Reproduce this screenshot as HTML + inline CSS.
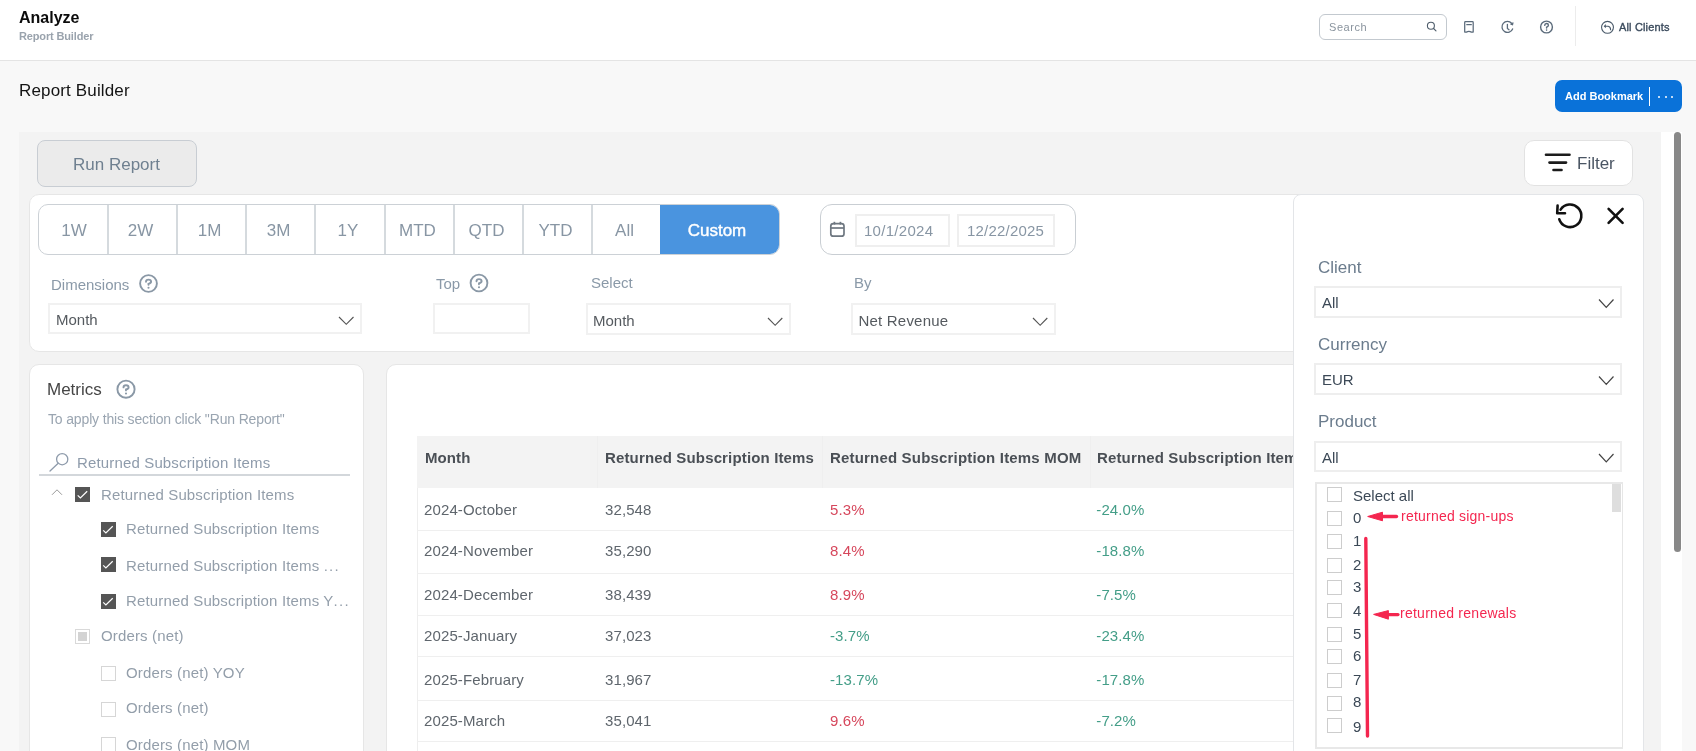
<!DOCTYPE html><html><head><meta charset="utf-8"><style>
html,body{margin:0;padding:0}
body{-webkit-font-smoothing:antialiased;will-change:transform;width:1696px;height:751px;overflow:hidden;position:relative;background:#f8f8f8;font-family:"Liberation Sans",sans-serif}
.a{position:absolute;box-sizing:border-box}
.t{position:absolute;white-space:nowrap;line-height:normal;font-family:"Liberation Sans",sans-serif}
svg{position:absolute;overflow:visible}
</style></head><body>
<div class="a" style="left:0px;top:0px;width:1696px;height:60px;background:#fff"></div>
<div class="a" style="left:0px;top:60px;width:1696px;height:1px;background:#e4e4e4"></div>
<div class="t" style="left:19px;top:9px;font-size:16px;color:#0b0b0b;font-weight:bold;">Analyze</div>
<div class="t" style="left:19px;top:30px;font-size:11px;color:#9aa3ad;font-weight:bold;letter-spacing:-0.15px">Report Builder</div>
<div class="a" style="left:1319px;top:14px;width:128px;height:26px;border:1px solid #c3c9cf;border-radius:6px;background:#fff"></div>
<div class="t" style="left:1329px;top:21px;font-size:11px;color:#8a949e;font-weight:normal;letter-spacing:0.55px">Search</div>
<svg style="left:0;top:0" width="1696" height="60"><g fill="none" stroke="#4f5d6b" stroke-width="1.1" stroke-linecap="round"><circle cx="1430.9" cy="25.8" r="3.5"/><line x1="1433.6" y1="28.5" x2="1436" y2="30.9"/></g><g fill="none" stroke="#5b6b7b" stroke-width="1.25" stroke-linejoin="round"><path d="M1464.7 32.1 V22.4 Q1464.7 21.7 1465.4 21.7 H1472.5 Q1473.2 21.7 1473.2 22.4 V32.1 H1471.4 Q1468.9 30.5 1466.4 32.1 Z"/><line x1="1466.3" y1="24.6" x2="1471.8" y2="24.6"/></g><g fill="none" stroke="#5b6b7b" stroke-width="1.3" stroke-linecap="round"><path d="M1511.6 23.2 A5.5 5.5 0 1 0 1512.6 28.9"/><path d="M1507.4 24.3 V28.4 L1509 29.8"/><path d="M1512.9 22.9 L1512.5 24.6 L1510.9 24.2"/></g><g fill="none" stroke="#5b6b7b" stroke-width="1.4" stroke-linecap="round"><circle cx="1546.5" cy="27" r="5.9"/><path d="M1544.7 25.4 Q1544.8 23.5 1546.6 23.5 Q1548.4 23.5 1548.4 25.2 Q1548.4 26.4 1546.6 27.2 V28"/></g><circle cx="1546.6" cy="30.1" r="0.8" fill="#5b6b7b"/><line x1="1575.5" y1="6" x2="1575.5" y2="46" stroke="#ececec" stroke-width="1"/><g fill="none" stroke="#4a5a6a" stroke-width="1.1" stroke-linecap="round"><circle cx="1607.5" cy="27.35" r="5.95"/><path d="M1605.2 26.2 H1608.2 Q1610.6 26.6 1610.6 29.8"/></g><path d="M1603.7 26.2 L1605.8 24.1 L1605.8 28.2 Z" fill="#4a5a6a"/></svg>
<div class="t" style="left:1619px;top:21px;font-size:11px;color:#3a4a5c;font-weight:normal;-webkit-text-stroke:0.35px #3a4a5c;letter-spacing:0.15px">All Clients</div>
<div class="t" style="left:19px;top:81px;font-size:17px;color:#141414;font-weight:normal;letter-spacing:0.15px">Report Builder</div>
<div class="a" style="left:1555px;top:80px;width:127px;height:32px;background:#0a72d9;border-radius:7px"></div>
<div class="t" style="left:1565px;top:90px;font-size:11px;color:#ffffff;font-weight:bold;">Add Bookmark</div>
<div class="a" style="left:1649px;top:87px;width:1px;height:19px;background:#fff"></div>
<div class="a" style="left:1658px;top:95.5px;width:2px;height:2px;background:#fff;border-radius:1px"></div>
<div class="a" style="left:1664.6px;top:95.5px;width:2px;height:2px;background:#fff;border-radius:1px"></div>
<div class="a" style="left:1671px;top:95.5px;width:2px;height:2px;background:#fff;border-radius:1px"></div>
<div class="a" style="left:19px;top:132px;width:1642px;height:619px;background:#f3f3f3"></div>
<div class="a" style="left:1661px;top:132px;width:21px;height:619px;background:#fff"></div>
<div class="a" style="left:1674px;top:132px;width:7px;height:420px;background:#888;border-radius:4px"></div>
<div class="a" style="left:37px;top:140px;width:160px;height:47px;background:#ebebeb;border:1px solid #c8cdd3;border-radius:8px"></div>
<div class="t" style="left:73px;top:155px;font-size:17px;color:#6f8090;font-weight:normal;">Run Report</div>
<div class="a" style="left:1524px;top:140px;width:109px;height:46px;background:#fff;border:1px solid #e2e2e2;border-radius:10px"></div>
<svg style="left:0;top:0" width="1696" height="200"><g stroke="#1c1c1c" stroke-width="2.6" stroke-linecap="round"><line x1="1546" y1="154.8" x2="1569.5" y2="154.8"/><line x1="1549.5" y1="162.6" x2="1566" y2="162.6"/><line x1="1553.5" y1="170" x2="1561.5" y2="170"/></g></svg>
<div class="t" style="left:1577px;top:154px;font-size:17px;color:#4a5563;font-weight:normal;">Filter</div>
<div class="a" style="left:29px;top:194px;width:1615px;height:158px;background:#fff;border:1px solid #e6e6e6;border-radius:10px"></div>
<div class="a" style="left:38px;top:204px;width:742px;height:51px;border:1px solid #ccd1d6;border-radius:10px;background:#fff"></div>
<div class="t" style="left:39.5px;width:69px;text-align:center;top:221px;font-size:17px;color:#8896a4">1W</div>
<div class="t" style="left:106px;width:69px;text-align:center;top:221px;font-size:17px;color:#8896a4">2W</div>
<div class="t" style="left:175px;width:69px;text-align:center;top:221px;font-size:17px;color:#8896a4">1M</div>
<div class="t" style="left:244px;width:69px;text-align:center;top:221px;font-size:17px;color:#8896a4">3M</div>
<div class="t" style="left:313px;width:70px;text-align:center;top:221px;font-size:17px;color:#8896a4">1Y</div>
<div class="t" style="left:383px;width:69px;text-align:center;top:221px;font-size:17px;color:#8896a4">MTD</div>
<div class="t" style="left:452px;width:69px;text-align:center;top:221px;font-size:17px;color:#8896a4">QTD</div>
<div class="t" style="left:521px;width:69px;text-align:center;top:221px;font-size:17px;color:#8896a4">YTD</div>
<div class="t" style="left:590px;width:69px;text-align:center;top:221px;font-size:17px;color:#8896a4">All</div>
<div class="a" style="left:107px;top:205px;width:1.5px;height:49px;background:#d5dade"></div>
<div class="a" style="left:176px;top:205px;width:1.5px;height:49px;background:#d5dade"></div>
<div class="a" style="left:245px;top:205px;width:1.5px;height:49px;background:#d5dade"></div>
<div class="a" style="left:314px;top:205px;width:1.5px;height:49px;background:#d5dade"></div>
<div class="a" style="left:384px;top:205px;width:1.5px;height:49px;background:#d5dade"></div>
<div class="a" style="left:453px;top:205px;width:1.5px;height:49px;background:#d5dade"></div>
<div class="a" style="left:522px;top:205px;width:1.5px;height:49px;background:#d5dade"></div>
<div class="a" style="left:591px;top:205px;width:1.5px;height:49px;background:#d5dade"></div>
<div class="a" style="left:660px;top:205px;width:119px;height:49px;background:#4a94df;border-top-right-radius:9px;border-bottom-right-radius:9px"></div>
<div class="t" style="left:658px;width:118px;text-align:center;top:221px;font-size:17px;color:#fff;-webkit-text-stroke:0.4px #fff">Custom</div>
<div class="a" style="left:820px;top:204px;width:256px;height:51px;border:1px solid #c9ced3;border-radius:12px;background:#fff"></div>
<svg style="left:0;top:0" width="1696" height="260"><g fill="none" stroke="#6e7780" stroke-width="1.7"><rect x="830.8" y="223.6" width="13.2" height="12.6" rx="2.5"/><line x1="830.8" y1="228" x2="844" y2="228"/><line x1="834.4" y1="221.8" x2="834.4" y2="224.6"/><line x1="840.4" y1="221.8" x2="840.4" y2="224.6"/></g></svg>
<div class="a" style="left:855px;top:214px;width:95px;height:33px;border:2px solid #efefef"></div>
<div class="t" style="left:864px;top:222px;font-size:15px;color:#8896a4;font-weight:normal;letter-spacing:0.28px">10/1/2024</div>
<div class="a" style="left:957px;top:214px;width:98px;height:33px;border:2px solid #efefef"></div>
<div class="t" style="left:967px;top:222px;font-size:15px;color:#8896a4;font-weight:normal;letter-spacing:0.2px">12/22/2025</div>
<div class="t" style="left:51px;top:276px;font-size:15px;color:#8a99a8;font-weight:normal;">Dimensions</div>
<svg style="left:0;top:0" width="1" height="1"><g fill="none" stroke="#8a98a6" stroke-width="1.9" stroke-linecap="round"><circle cx="148.5" cy="283.5" r="8.4"/><path d="M146.0 281.7 Q146.0 279.6 148.5 279.6 Q151.1 279.6 151.1 281.7 Q151.1 283.0 148.5 283.8 V284.7"/></g><circle cx="148.5" cy="287.8" r="1.05" fill="#8a98a6"/></svg>
<div class="a" style="left:48px;top:303px;width:314px;height:31px;border:2px solid #f1f1f1;background:#fff"></div>
<div class="t" style="left:56px;top:311px;font-size:15px;color:#555a5f;font-weight:normal;">Month</div>
<svg style="left:0;top:0" width="1" height="1"><path d="M339 317 L346.25 324.3 L353.5 317" fill="none" stroke="#555" stroke-width="1.15"/></svg>
<div class="t" style="left:436px;top:275px;font-size:15px;color:#8a99a8;font-weight:normal;">Top</div>
<svg style="left:0;top:0" width="1" height="1"><g fill="none" stroke="#8a98a6" stroke-width="1.9" stroke-linecap="round"><circle cx="479" cy="283" r="8.4"/><path d="M476.5 281.2 Q476.5 279.1 479 279.1 Q481.6 279.1 481.6 281.2 Q481.6 282.5 479 283.3 V284.2"/></g><circle cx="479" cy="287.3" r="1.05" fill="#8a98a6"/></svg>
<div class="a" style="left:433px;top:303px;width:97px;height:31px;border:2px solid #f1f1f1;background:#fff"></div>
<div class="t" style="left:591px;top:274px;font-size:15px;color:#8a99a8;font-weight:normal;">Select</div>
<div class="a" style="left:586px;top:303px;width:205px;height:32px;border:2px solid #f1f1f1;background:#fff"></div>
<div class="t" style="left:593px;top:312px;font-size:15px;color:#555a5f;font-weight:normal;">Month</div>
<svg style="left:0;top:0" width="1" height="1"><path d="M768 318 L775.15 325.3 L782.3 318" fill="none" stroke="#555" stroke-width="1.15"/></svg>
<div class="t" style="left:854px;top:274px;font-size:15px;color:#8a99a8;font-weight:normal;">By</div>
<div class="a" style="left:851px;top:303px;width:205px;height:32px;border:2px solid #f1f1f1;background:#fff"></div>
<div class="t" style="left:858.5px;top:312px;font-size:15px;color:#555a5f;font-weight:normal;letter-spacing:0.2px">Net Revenue</div>
<svg style="left:0;top:0" width="1" height="1"><path d="M1033 318 L1040.15 325.3 L1047.3 318" fill="none" stroke="#555" stroke-width="1.15"/></svg>
<div class="a" style="left:29px;top:364px;width:335px;height:420px;background:#fff;border:1px solid #e6e6e6;border-radius:10px"></div>
<div class="t" style="left:47px;top:380px;font-size:17px;color:#464646;font-weight:normal;">Metrics</div>
<svg style="left:0;top:0" width="1" height="1"><g fill="none" stroke="#8a98a6" stroke-width="1.9" stroke-linecap="round"><circle cx="126" cy="389.2" r="8.6"/><path d="M123.5 387.4 Q123.5 385.3 126 385.3 Q128.6 385.3 128.6 387.4 Q128.6 388.7 126 389.5 V390.4"/></g><circle cx="126" cy="393.5" r="1.05" fill="#8a98a6"/></svg>
<div class="t" style="left:48px;top:411px;font-size:14px;color:#9aa5b1;font-weight:normal;letter-spacing:-0.15px">To apply this section click &quot;Run Report&quot;</div>
<svg style="left:0;top:0" width="1" height="1"><g fill="none" stroke="#8e9bab" stroke-width="1.3" stroke-linecap="round"><circle cx="62.2" cy="459.2" r="5.6"/><line x1="58.2" y1="463.2" x2="50" y2="471"/></g></svg>
<div class="t" style="left:77px;top:454px;font-size:15px;color:#8e9bab;font-weight:normal;letter-spacing:0.15px">Returned Subscription Items</div>
<div class="a" style="left:39px;top:474px;width:311px;height:2px;background:#d3d7db"></div>
<svg style="left:0;top:0" width="1" height="1"><path d="M52 494.8 L57 489.8 L62 494.8" fill="none" stroke="#999999" stroke-width="1"/></svg>
<div class="a" style="left:75px;top:487px;width:15px;height:15px;background:#555"></div><svg style="left:0;top:0" width="1" height="1"><path d="M77.7 495.3 L80.4 498 L87.2 491.3" fill="none" stroke="#fff" stroke-width="1.2"/></svg>
<div class="t" style="left:101px;top:486px;font-size:15px;color:#939eaa;font-weight:normal;letter-spacing:0.15px">Returned Subscription Items</div>
<div class="a" style="left:100.5px;top:522px;width:15px;height:15px;background:#555"></div><svg style="left:0;top:0" width="1" height="1"><path d="M103.2 530.3 L105.9 533 L112.7 526.3" fill="none" stroke="#fff" stroke-width="1.2"/></svg>
<div class="t" style="left:126px;top:520px;font-size:15px;color:#939eaa;font-weight:normal;letter-spacing:0.15px">Returned Subscription Items</div>
<div class="a" style="left:100.5px;top:557px;width:15px;height:15px;background:#555"></div><svg style="left:0;top:0" width="1" height="1"><path d="M103.2 565.3 L105.9 568 L112.7 561.3" fill="none" stroke="#fff" stroke-width="1.2"/></svg>
<div class="t" style="left:126px;top:557px;font-size:15px;color:#939eaa;font-weight:normal;letter-spacing:0.15px">Returned Subscription Items <span style="letter-spacing:1.3px">...</span></div>
<div class="a" style="left:100.5px;top:594px;width:15px;height:15px;background:#555"></div><svg style="left:0;top:0" width="1" height="1"><path d="M103.2 602.3 L105.9 605 L112.7 598.3" fill="none" stroke="#fff" stroke-width="1.2"/></svg>
<div class="t" style="left:126px;top:592px;font-size:15px;color:#939eaa;font-weight:normal;letter-spacing:0.15px">Returned Subscription Items Y<span style="letter-spacing:1.3px">...</span></div>
<div class="a" style="left:75px;top:629px;width:15px;height:15px;border:1.5px solid #d9d9d9;background:#fff"></div><div class="a" style="left:78px;top:632px;width:9px;height:9px;background:#d3d3d3"></div>
<div class="t" style="left:101px;top:627px;font-size:15px;color:#939eaa;font-weight:normal;letter-spacing:0.15px">Orders (net)</div>
<div class="a" style="left:100.5px;top:666px;width:15px;height:15px;border:1.5px solid #d6d6d6;background:#fff"></div>
<div class="t" style="left:126px;top:664px;font-size:15px;color:#939eaa;font-weight:normal;letter-spacing:0.15px">Orders (net) YOY</div>
<div class="a" style="left:100.5px;top:702px;width:15px;height:15px;border:1.5px solid #d6d6d6;background:#fff"></div>
<div class="t" style="left:126px;top:699px;font-size:15px;color:#939eaa;font-weight:normal;letter-spacing:0.15px">Orders (net)</div>
<div class="a" style="left:100.5px;top:737px;width:15px;height:15px;border:1.5px solid #d6d6d6;background:#fff"></div>
<div class="t" style="left:126px;top:736px;font-size:15px;color:#939eaa;font-weight:normal;letter-spacing:0.15px">Orders (net) MOM</div>
<div class="a" style="left:386px;top:364px;width:1258px;height:420px;background:#fff;border:1px solid #e6e6e6;border-radius:10px"></div>
<div class="a" style="left:417px;top:436px;width:900px;height:52px;background:#f3f3f3"></div>
<div class="a" style="left:597px;top:436px;width:1px;height:52px;background:#efefef"></div>
<div class="a" style="left:822px;top:436px;width:1px;height:52px;background:#efefef"></div>
<div class="a" style="left:1090px;top:436px;width:1px;height:52px;background:#efefef"></div>
<div class="t" style="left:425px;top:449px;font-size:15px;color:#4a4f55;font-weight:bold;letter-spacing:0.1px">Month</div>
<div class="t" style="left:605px;top:449px;font-size:15px;color:#4a4f55;font-weight:bold;letter-spacing:0.15px">Returned Subscription Items</div>
<div class="t" style="left:830px;top:449px;font-size:15px;color:#4a4f55;font-weight:bold;letter-spacing:0.18px">Returned Subscription Items MOM</div>
<div class="t" style="left:1097px;top:449px;font-size:15px;color:#4a4f55;font-weight:bold;letter-spacing:0.15px">Returned Subscription Items YOY</div>
<div class="a" style="left:417px;top:488px;width:1px;height:300px;background:#eeeeee"></div>
<div class="a" style="left:417px;top:530px;width:900px;height:1px;background:#efefef"></div>
<div class="a" style="left:417px;top:573px;width:900px;height:1px;background:#efefef"></div>
<div class="a" style="left:417px;top:615px;width:900px;height:1px;background:#efefef"></div>
<div class="a" style="left:417px;top:656px;width:900px;height:1px;background:#efefef"></div>
<div class="a" style="left:417px;top:700px;width:900px;height:1px;background:#efefef"></div>
<div class="a" style="left:417px;top:741px;width:900px;height:1px;background:#efefef"></div>
<div class="t" style="left:424px;top:501px;font-size:15px;color:#5f666d;font-weight:normal;letter-spacing:0.12px">2024-October</div>
<div class="t" style="left:605px;top:501px;font-size:15px;color:#5f666d;font-weight:normal;letter-spacing:0.1px">32,548</div>
<div class="t" style="left:830px;top:501px;font-size:15px;color:#d6475c;font-weight:normal;letter-spacing:0.1px">5.3%</div>
<div class="t" style="left:1096.3px;top:501px;font-size:15px;color:#449e88;font-weight:normal;letter-spacing:0.1px">-24.0%</div>
<div class="t" style="left:424px;top:542px;font-size:15px;color:#5f666d;font-weight:normal;letter-spacing:0.12px">2024-November</div>
<div class="t" style="left:605px;top:542px;font-size:15px;color:#5f666d;font-weight:normal;letter-spacing:0.1px">35,290</div>
<div class="t" style="left:830px;top:542px;font-size:15px;color:#d6475c;font-weight:normal;letter-spacing:0.1px">8.4%</div>
<div class="t" style="left:1096.3px;top:542px;font-size:15px;color:#449e88;font-weight:normal;letter-spacing:0.1px">-18.8%</div>
<div class="t" style="left:424px;top:586px;font-size:15px;color:#5f666d;font-weight:normal;letter-spacing:0.12px">2024-December</div>
<div class="t" style="left:605px;top:586px;font-size:15px;color:#5f666d;font-weight:normal;letter-spacing:0.1px">38,439</div>
<div class="t" style="left:830px;top:586px;font-size:15px;color:#d6475c;font-weight:normal;letter-spacing:0.1px">8.9%</div>
<div class="t" style="left:1096.3px;top:586px;font-size:15px;color:#449e88;font-weight:normal;letter-spacing:0.1px">-7.5%</div>
<div class="t" style="left:424px;top:627px;font-size:15px;color:#5f666d;font-weight:normal;letter-spacing:0.12px">2025-January</div>
<div class="t" style="left:605px;top:627px;font-size:15px;color:#5f666d;font-weight:normal;letter-spacing:0.1px">37,023</div>
<div class="t" style="left:830px;top:627px;font-size:15px;color:#449e88;font-weight:normal;letter-spacing:0.1px">-3.7%</div>
<div class="t" style="left:1096.3px;top:627px;font-size:15px;color:#449e88;font-weight:normal;letter-spacing:0.1px">-23.4%</div>
<div class="t" style="left:424px;top:671px;font-size:15px;color:#5f666d;font-weight:normal;letter-spacing:0.12px">2025-February</div>
<div class="t" style="left:605px;top:671px;font-size:15px;color:#5f666d;font-weight:normal;letter-spacing:0.1px">31,967</div>
<div class="t" style="left:830px;top:671px;font-size:15px;color:#449e88;font-weight:normal;letter-spacing:0.1px">-13.7%</div>
<div class="t" style="left:1096.3px;top:671px;font-size:15px;color:#449e88;font-weight:normal;letter-spacing:0.1px">-17.8%</div>
<div class="t" style="left:424px;top:712px;font-size:15px;color:#5f666d;font-weight:normal;letter-spacing:0.12px">2025-March</div>
<div class="t" style="left:605px;top:712px;font-size:15px;color:#5f666d;font-weight:normal;letter-spacing:0.1px">35,041</div>
<div class="t" style="left:830px;top:712px;font-size:15px;color:#d6475c;font-weight:normal;letter-spacing:0.1px">9.6%</div>
<div class="t" style="left:1096.3px;top:712px;font-size:15px;color:#449e88;font-weight:normal;letter-spacing:0.1px">-7.2%</div>
<div class="a" style="left:1293px;top:194px;width:351px;height:600px;background:#fff;border:1px solid #e3e5e8;border-radius:8px"></div>
<svg style="left:0;top:0" width="1" height="1"><g fill="none" stroke="#111" stroke-width="2.6" stroke-linecap="round" stroke-linejoin="round"><path d="M1559.3 219.3 A11.3 11.3 0 1 0 1560.6 209.6"/><path d="M1557.6 205.6 L1557.2 213.3 L1565 213.3"/><line x1="1608.6" y1="208.8" x2="1622.6" y2="222.9"/><line x1="1622.6" y1="208.8" x2="1608.6" y2="222.9"/></g></svg>
<div class="t" style="left:1318px;top:258px;font-size:17px;color:#6b7c8d;font-weight:normal;">Client</div>
<div class="a" style="left:1314px;top:286px;width:308px;height:32px;border:2px solid #eeeeee;background:#fff"></div>
<div class="t" style="left:1322px;top:294px;font-size:15px;color:#3b4856;font-weight:normal;">All</div>
<svg style="left:0;top:0" width="1" height="1"><path d="M1599 299.5 L1606.25 307.3 L1613.5 299.5" fill="none" stroke="#444" stroke-width="1.2"/></svg>
<div class="t" style="left:1318px;top:335px;font-size:17px;color:#6b7c8d;font-weight:normal;">Currency</div>
<div class="a" style="left:1314px;top:363px;width:308px;height:32px;border:2px solid #eeeeee;background:#fff"></div>
<div class="t" style="left:1322px;top:371px;font-size:15px;color:#3b4856;font-weight:normal;">EUR</div>
<svg style="left:0;top:0" width="1" height="1"><path d="M1599 376.5 L1606.25 384.3 L1613.5 376.5" fill="none" stroke="#444" stroke-width="1.2"/></svg>
<div class="t" style="left:1318px;top:412px;font-size:17px;color:#6b7c8d;font-weight:normal;">Product</div>
<div class="a" style="left:1314px;top:441px;width:308px;height:31px;border:2px solid #eeeeee;background:#fff"></div>
<div class="t" style="left:1322px;top:449px;font-size:15px;color:#3b4856;font-weight:normal;">All</div>
<svg style="left:0;top:0" width="1" height="1"><path d="M1599 454 L1606.25 461.8 L1613.5 454" fill="none" stroke="#444" stroke-width="1.2"/></svg>
<div class="a" style="left:1315px;top:482px;width:308px;height:267px;border:2px solid #e8e8e8;border-right:1px solid #e6e6e6;background:#fff"></div>
<div class="a" style="left:1612px;top:484px;width:9px;height:28px;background:#dedede"></div>
<div class="a" style="left:1327px;top:487px;width:15px;height:15px;border:1.5px solid #cdcdcd;background:#fff"></div>
<div class="t" style="left:1353px;top:487px;font-size:15px;color:#3b4856;font-weight:normal;">Select all</div>
<div class="a" style="left:1327px;top:511px;width:15px;height:15px;border:1.5px solid #cdcdcd;background:#fff"></div>
<div class="t" style="left:1353px;top:509px;font-size:15px;color:#3b4856;font-weight:normal;">0</div>
<div class="a" style="left:1327px;top:534px;width:15px;height:15px;border:1.5px solid #cdcdcd;background:#fff"></div>
<div class="t" style="left:1353px;top:532px;font-size:15px;color:#3b4856;font-weight:normal;">1</div>
<div class="a" style="left:1327px;top:558px;width:15px;height:15px;border:1.5px solid #cdcdcd;background:#fff"></div>
<div class="t" style="left:1353px;top:556px;font-size:15px;color:#3b4856;font-weight:normal;">2</div>
<div class="a" style="left:1327px;top:580px;width:15px;height:15px;border:1.5px solid #cdcdcd;background:#fff"></div>
<div class="t" style="left:1353px;top:578px;font-size:15px;color:#3b4856;font-weight:normal;">3</div>
<div class="a" style="left:1327px;top:603px;width:15px;height:15px;border:1.5px solid #cdcdcd;background:#fff"></div>
<div class="t" style="left:1353px;top:602px;font-size:15px;color:#3b4856;font-weight:normal;">4</div>
<div class="a" style="left:1327px;top:627px;width:15px;height:15px;border:1.5px solid #cdcdcd;background:#fff"></div>
<div class="t" style="left:1353px;top:625px;font-size:15px;color:#3b4856;font-weight:normal;">5</div>
<div class="a" style="left:1327px;top:649px;width:15px;height:15px;border:1.5px solid #cdcdcd;background:#fff"></div>
<div class="t" style="left:1353px;top:647px;font-size:15px;color:#3b4856;font-weight:normal;">6</div>
<div class="a" style="left:1327px;top:673px;width:15px;height:15px;border:1.5px solid #cdcdcd;background:#fff"></div>
<div class="t" style="left:1353px;top:671px;font-size:15px;color:#3b4856;font-weight:normal;">7</div>
<div class="a" style="left:1327px;top:696px;width:15px;height:15px;border:1.5px solid #cdcdcd;background:#fff"></div>
<div class="t" style="left:1353px;top:693px;font-size:15px;color:#3b4856;font-weight:normal;">8</div>
<div class="a" style="left:1327px;top:718px;width:15px;height:15px;border:1.5px solid #cdcdcd;background:#fff"></div>
<div class="t" style="left:1353px;top:718px;font-size:15px;color:#3b4856;font-weight:normal;">9</div>
<svg style="left:0;top:0" width="1" height="1"><path d="M1367.7 516.5 L1382.5 512.2 L1382.5 520.8 Z" fill="#f4264f" stroke="#f4264f" stroke-width="1" stroke-linejoin="round"/><line x1="1380" y1="516.5" x2="1396.5" y2="516.5" stroke="#f4264f" stroke-width="3.4" stroke-linecap="round"/><path d="M1373.6 614.4 L1388.4 610.6 L1388.4 619.2 Z" fill="#f4264f" stroke="#f4264f" stroke-width="1" stroke-linejoin="round"/><line x1="1386" y1="614.6" x2="1398" y2="614.6" stroke="#f4264f" stroke-width="3.2" stroke-linecap="round"/><line x1="1365.8" y1="538.5" x2="1367.5" y2="736" stroke="#f4264f" stroke-width="3.4" stroke-linecap="round"/></svg>
<div class="t" style="left:1401px;top:508px;font-size:14px;color:#f4264f;font-weight:normal;letter-spacing:0.22px">returned sign-ups</div>
<div class="t" style="left:1400px;top:605px;font-size:14px;color:#f4264f;font-weight:normal;letter-spacing:0.26px">returned renewals</div>
</body></html>
